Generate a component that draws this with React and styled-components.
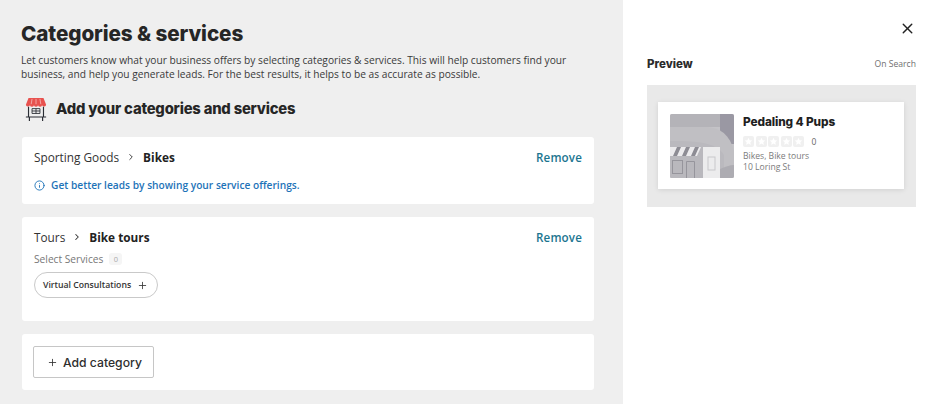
import React from 'react';
import styled, { createGlobalStyle } from 'styled-components';
import { ChevronRight, Info, Plus, X } from 'lucide-react';

const GlobalStyle = createGlobalStyle`
  html, body {
    margin: 0;
    padding: 0;
    background: #fff;
    font-family: "Open Sans", "Liberation Sans", sans-serif;
    color: #2b2b2b;
  }
  * {
    box-sizing: border-box;
  }
`;

const Page = styled.div`
  width: 932px;
  height: 414px;
  display: flex;
  align-items: flex-start;
  overflow: hidden;
`;

const Main = styled.main`
  width: 623px;
  height: 404px;
  background: #efefef;
  padding: 20px 29px 0 22px;
  display: flex;
  flex-direction: column;
`;

const Title = styled.h1`
  margin: 0 0 0 -1px;
  font-family: Inter, sans-serif;
  font-size: 20.7px;
  line-height: 27px;
  font-weight: 800;
  letter-spacing: -0.1px;
  color: #262626;
`;

const Intro = styled.p`
  margin: 6px 0 0 -1px;
  font-size: 10.2px;
  line-height: 14.2px;
  color: #3a3a3a;
`;

const SectionHead = styled.div`
  display: flex;
  align-items: center;
  gap: 9px;
  margin: 13px 0 0 3px;
  height: 30px;
`;

const SectionTitle = styled.h2`
  margin: 0;
  font-family: Inter, sans-serif;
  font-size: 14.8px;
  font-weight: 800;
  letter-spacing: -0.2px;
  color: #262626;
`;

const Card = styled.section`
  background: #fff;
  border-radius: 3px;
  margin-top: ${(p) => p.$gap}px;
  height: ${(p) => p.$height}px;
  padding: 12px 12px 0 11px;
`;

const Row = styled.div`
  display: flex;
  align-items: center;
  justify-content: space-between;
  height: 17px;
`;

const Crumbs = styled.div`
  display: flex;
  align-items: center;
  gap: 7px;
  margin: 0 0 1px 1px;
  font-size: 11.8px;
  color: #333;
`;

const Strong = styled.strong`
  font-weight: 700;
  color: #222;
`;

const Remove = styled.a`
  font-size: 11.6px;
  font-weight: 600;
  letter-spacing: 0.15px;
  color: #1b7590;
`;

const Tip = styled.div`
  display: flex;
  align-items: center;
  gap: 6px;
  margin: 12px 0 0 1px;
  font-size: 10.2px;
  font-weight: 600;
  color: #1e73b8;
`;

const ServicesLabel = styled.div`
  display: flex;
  align-items: center;
  gap: 6px;
  margin: 6px 0 0 1px;
  font-size: 10.2px;
  line-height: 14px;
  color: #777;
`;

const Count = styled.span`
  display: inline-flex;
  align-items: center;
  justify-content: center;
  width: 13px;
  height: 12px;
  border-radius: 3px;
  background: #f5f5f5;
  font-size: 7.5px;
  color: #aaa;
`;

const Chip = styled.button`
  display: flex;
  align-items: center;
  gap: 6px;
  width: 124px;
  height: 26px;
  margin: 6px 0 0 1px;
  padding: 0 0 0 8px;
  background: #fff;
  border: 1px solid #c9c9c9;
  border-radius: 13px;
  font-family: "Open Sans", sans-serif;
  font-size: 8.7px;
  font-weight: 600;
  white-space: nowrap;
  color: #333;
`;

const AddButton = styled.button`
  display: flex;
  align-items: center;
  gap: 5px;
  width: 121px;
  height: 32px;
  padding: 0 0 0 13px;
  background: #fff;
  border: 1px solid #c6c6c6;
  border-radius: 2px;
  font-family: Inter, sans-serif;
  font-size: 12.2px;
  font-weight: 500;
  white-space: nowrap;
  color: #2e2e2e;
`;

const Side = styled.aside`
  flex: 1;
  height: 404px;
  padding: 0 16px 0 24px;
  display: flex;
  flex-direction: column;
`;

const CloseRow = styled.div`
  display: flex;
  justify-content: flex-end;
  height: 56px;
  padding: 20px 0 0 0;
  color: #222;
`;

const PreviewHead = styled.div`
  display: flex;
  align-items: center;
  justify-content: space-between;
  height: 15px;
`;

const PreviewTitle = styled.div`
  font-family: Inter, sans-serif;
  font-size: 11.5px;
  font-weight: 800;
  color: #2b2b2b;
`;

const OnSearch = styled.div`
  font-size: 8.6px;
  color: #707070;
`;

const PreviewBox = styled.div`
  margin-top: 14px;
  height: 122px;
  background: #e9e9e9;
  padding: 17px 12px 18px 11px;
`;

const ListingCard = styled.div`
  height: 87px;
  display: flex;
  gap: 9px;
  padding: 12px;
  background: #fff;
  box-shadow: 0 1px 5px rgba(0, 0, 0, 0.1);
`;

const Thumb = styled.svg`
  width: 64px;
  height: 64px;
  flex: none;
  border-radius: 2px;
`;

const ListingInfo = styled.div`
  display: flex;
  flex-direction: column;
`;

const ListingName = styled.div`
  margin-top: 1px;
  font-family: Inter, sans-serif;
  font-size: 11.8px;
  line-height: 15px;
  font-weight: 800;
  letter-spacing: -0.1px;
  color: #1f1f1f;
`;

const Rating = styled.div`
  display: flex;
  align-items: center;
  gap: 1.5px;
  margin-top: 6px;
  height: 11px;
`;

const StarBox = styled.svg`
  width: 11px;
  height: 11px;
  border-radius: 2px;
  background: #f0f0f0;
`;

const RatingCount = styled.span`
  margin-left: 6px;
  font-size: 8.5px;
  color: #666;
`;

const MetaList = styled.div`
  margin-top: 4px;
  font-size: 8.6px;
  line-height: 11px;
  color: #7b7b7b;
`;

const StoreIcon = () => (
  <svg width="22" height="25" viewBox="0 0 25 28" fill="none">
    <path d="M4 1h17l3 7.500a2.400 2.400 0 0 1-4.600.6 2.400 2.400 0 0 1-4.600 0 2.400 2.400 0 0 1-4.600 0 2.400 2.400 0 0 1-4.600 0A2.400 2.400 0 0 1 1 8.500z" fill="#e8524f" />
    <path d="M8 2 7 8M12.500 2v6M17 2l1 6" stroke="#f7c9c8" strokeWidth="0.8" />
    <path d="M4 11v11M21 11v11M1 22.500h23M5 22.500V27M20 22.500V27" stroke="#2a2d34" strokeWidth="1.300" />
    <path d="M8 13h9v5.500H8zM12.500 13v5.500M8 15.700h9" stroke="#2a2d34" strokeWidth="1" />
  </svg>
);

const StorePlaceholder = () => (
  <Thumb viewBox="0 0 64 64">
    <rect width="64" height="64" fill="#c4c3c7" />
    <rect x="50" width="14" height="30" fill="#9a98a3" />
    <rect width="50" height="13" fill="#b4b3b8" />
    <path d="M0 13h36c14 0 24 8 28 24v27H0z" fill="#c0bfc3" />
    <path d="M0 27c22 0 46 0 54 14v23H0z" fill="#bab9be" />
    <rect x="33" y="33" width="17" height="31" fill="#ececed" />
    <rect x="38" y="43" width="7" height="13" fill="none" stroke="#c8c8cb" strokeWidth="1" />
    <path d="M50 64V55c5-2 10-4 14-4v13z" fill="#adacb2" />
    <path d="M0 33h33v31H0z" fill="#b9b8bd" />
    <path d="M0 33h31l-4 9H0z" fill="#ecebed" />
    <path d="M3 42l4-9h4l-4 9zM12 42l4-9h4l-4 9zM21 42l4-9h4l-4 9z" fill="#8d8c94" />
    <rect x="2.500" y="46.500" width="10" height="13" fill="none" stroke="#96959c" strokeWidth="1" />
    <path d="M16.500 64V47.500h8V64" fill="none" stroke="#96959c" strokeWidth="1" />
  </Thumb>
);

const RatingStar = () => (
  <StarBox viewBox="0 0 11 11">
    <path d="M5.500 1.800l1.100 2.400 2.600.3-1.900 1.800.5 2.600-2.300-1.300-2.300 1.300.5-2.600L1.800 4.500l2.600-.3z" fill="#fff" />
  </StarBox>
);

const App = () => (
  <Page>
    <GlobalStyle />
    <Main>
      <Title>Categories &amp; services</Title>
      <Intro>
        Let customers know what your business offers by selecting categories &amp; services. This will help customers find your
        <br />
        business, and help you generate leads. For the best results, it helps to be as accurate as possible.
      </Intro>
      <SectionHead>
        <StoreIcon />
        <SectionTitle>Add your categories and services</SectionTitle>
      </SectionHead>

      <Card $gap={13} $height={67}>
        <Row>
          <Crumbs>
            Sporting Goods
            <ChevronRight size={10} strokeWidth={2.200} />
            <Strong>Bikes</Strong>
          </Crumbs>
          <Remove>Remove</Remove>
        </Row>
        <Tip>
          <Info size={11} strokeWidth={2} />
          Get better leads by showing your service offerings.
        </Tip>
      </Card>

      <Card $gap={13} $height={104}>
        <Row>
          <Crumbs>
            Tours
            <ChevronRight size={10} strokeWidth={2.500} />
            <Strong>Bike tours</Strong>
          </Crumbs>
          <Remove>Remove</Remove>
        </Row>
        <ServicesLabel>
          Select Services
          <Count>0</Count>
        </ServicesLabel>
        <Chip>
          Virtual Consultations
          <Plus size={11} strokeWidth={1.800} />
        </Chip>
      </Card>

      <Card $gap={13} $height={56}>
        <AddButton>
          <Plus size={11} strokeWidth={1.800} />
          Add category
        </AddButton>
      </Card>
    </Main>

    <Side>
      <CloseRow>
        <X size={17} strokeWidth={2} />
      </CloseRow>
      <PreviewHead>
        <PreviewTitle>Preview</PreviewTitle>
        <OnSearch>On Search</OnSearch>
      </PreviewHead>
      <PreviewBox>
        <ListingCard>
          <StorePlaceholder />
          <ListingInfo>
            <ListingName>Pedaling 4 Pups</ListingName>
            <Rating>
              <RatingStar />
              <RatingStar />
              <RatingStar />
              <RatingStar />
              <RatingStar />
              <RatingCount>0</RatingCount>
            </Rating>
            <MetaList>
              <div>Bikes, Bike tours</div>
              <div>10 Loring St</div>
            </MetaList>
          </ListingInfo>
        </ListingCard>
      </PreviewBox>
    </Side>
  </Page>
);

export default App;
